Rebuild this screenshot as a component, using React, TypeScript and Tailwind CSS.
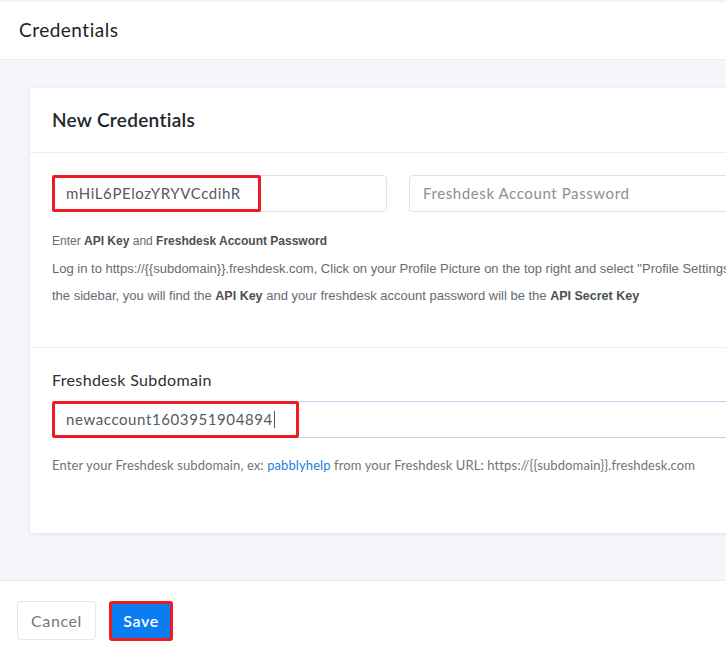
const sans = 'font-["Lato","Noto_Sans",sans-serif]';

function Highlight({ width }: { width: number }) {
  return (
    <div
      className="pointer-events-none absolute left-0 top-0 h-full rounded-[2px] border-[3px] border-[#ee1b24]"
      style={{ width }}
    />
  );
}

export default function App() {
  return (
    <div className={`flex h-[657px] w-[726px] flex-col overflow-hidden bg-white ${sans}`}>
      {/* Page header */}
      <div className="flex h-[60px] shrink-0 items-center border-t-2 border-b border-t-[#f1f2f5] border-b-[#e8ebf2] bg-white px-[19px] shadow-[0_1px_3px_rgba(30,40,80,0.06)]">
        <h1 className="text-[19px] tracking-[0.5px] text-[#1f2328]">Credentials</h1>
      </div>

      {/* Body */}
      <div className="flex-1 overflow-hidden bg-[#f4f6fb] pl-[30px] pt-[28px]">
        <div className="w-[760px] rounded-[4px] bg-white shadow-[0_1px_4px_rgba(30,40,80,0.08)]">
          <div className="flex h-[65px] items-center border-b border-[#e9eef5] px-[22px]">
            <h2 className="text-[19px] font-semibold tracking-[0.3px] text-[#22262b]">New Credentials</h2>
          </div>

          <div className="border-b border-[#eceff4] px-[22px] pb-[37px] pt-[22px]">
            <div className="flex gap-[22px]">
              <div className="relative w-[336px]">
                <div className="flex h-[37px] items-center rounded-[4px] border border-[#dfe2e7] px-[13px] text-[15px] tracking-[0.6px] text-[#555a60]">
                  mHiL6PElozYRYVCcdihR
                </div>
                <Highlight width={209} />
              </div>
              <div className="flex h-[37px] w-[360px] items-center rounded-[4px] border border-[#dfe2e7] px-[13px] text-[15px] tracking-[0.6px] text-[#8a8f96]">
                Freshdesk Account Password
              </div>
            </div>

            <div className='mt-[21px] font-["Liberation_Sans_Narrow","Liberation_Sans",sans-serif] text-[#666b72]'>
              <p className="text-[12px] leading-[16px]">
                Enter <b className="font-bold text-[#4a4f55]">API Key</b> and{' '}
                <b className="font-bold text-[#4a4f55]">Freshdesk Account Password</b>
              </p>
              <div className="mt-[6px] text-[13px] leading-[27px]">
                <p className="whitespace-nowrap">
                  Log in to https://{'{{subdomain}}'}.freshdesk.com, Click on your Profile Picture on the top right and select "Profile Settings" from
                </p>
                <p className="whitespace-nowrap">
                  the sidebar, you will find the <b className="text-[12.5px] font-bold text-[#4a4f55]">API Key</b> and your freshdesk account password will be the{' '}
                  <b className="text-[12.5px] font-bold text-[#4a4f55]">API Secret Key</b>
                </p>
              </div>
            </div>
          </div>

          <div className="px-[22px] pb-[60px] pt-[22px]">
            <label className="block text-[16px] leading-[20px] tracking-[0.35px] text-[#2b2f34]">Freshdesk Subdomain</label>
            <div className="relative mt-[11px]">
              <div className="flex h-[37px] items-center rounded-[4px] border border-[#bcd6f0] px-[13px] text-[15px] tracking-[0.6px] text-[#555a60]">
                newaccount1603951904894
                <span className="ml-[1px] h-[17px] w-px bg-[#555]" />
              </div>
              <Highlight width={247} />
            </div>
            <p className="mt-[19px] text-[13px] leading-[16px] tracking-[0.1px] text-[#6f747b]">
              Enter your Freshdesk subdomain, ex: <span className="text-[#1a7fe0]">pabblyhelp</span> from your Freshdesk URL: https://{'{{subdomain}}'}.freshdesk.com
            </p>
          </div>
        </div>
      </div>

      {/* Footer */}
      <div className="flex h-[77px] shrink-0 items-start gap-[13px] border-t border-[#e6e9ef] bg-white px-[17px] pt-[20px]">
        <button className="flex h-[39px] w-[79px] items-center justify-center rounded-[4px] border border-[#e4e6ea] bg-white text-[16px] tracking-[0.6px] text-[#72777e]">
          Cancel
        </button>
        <button className="flex h-[40px] w-[64px] items-center justify-center rounded-[3px] border-[3px] border-[#ee1b24] bg-[#0a7ef0] text-[16px] font-semibold tracking-[0.6px] text-white">
          Save
        </button>
      </div>
    </div>
  );
}
